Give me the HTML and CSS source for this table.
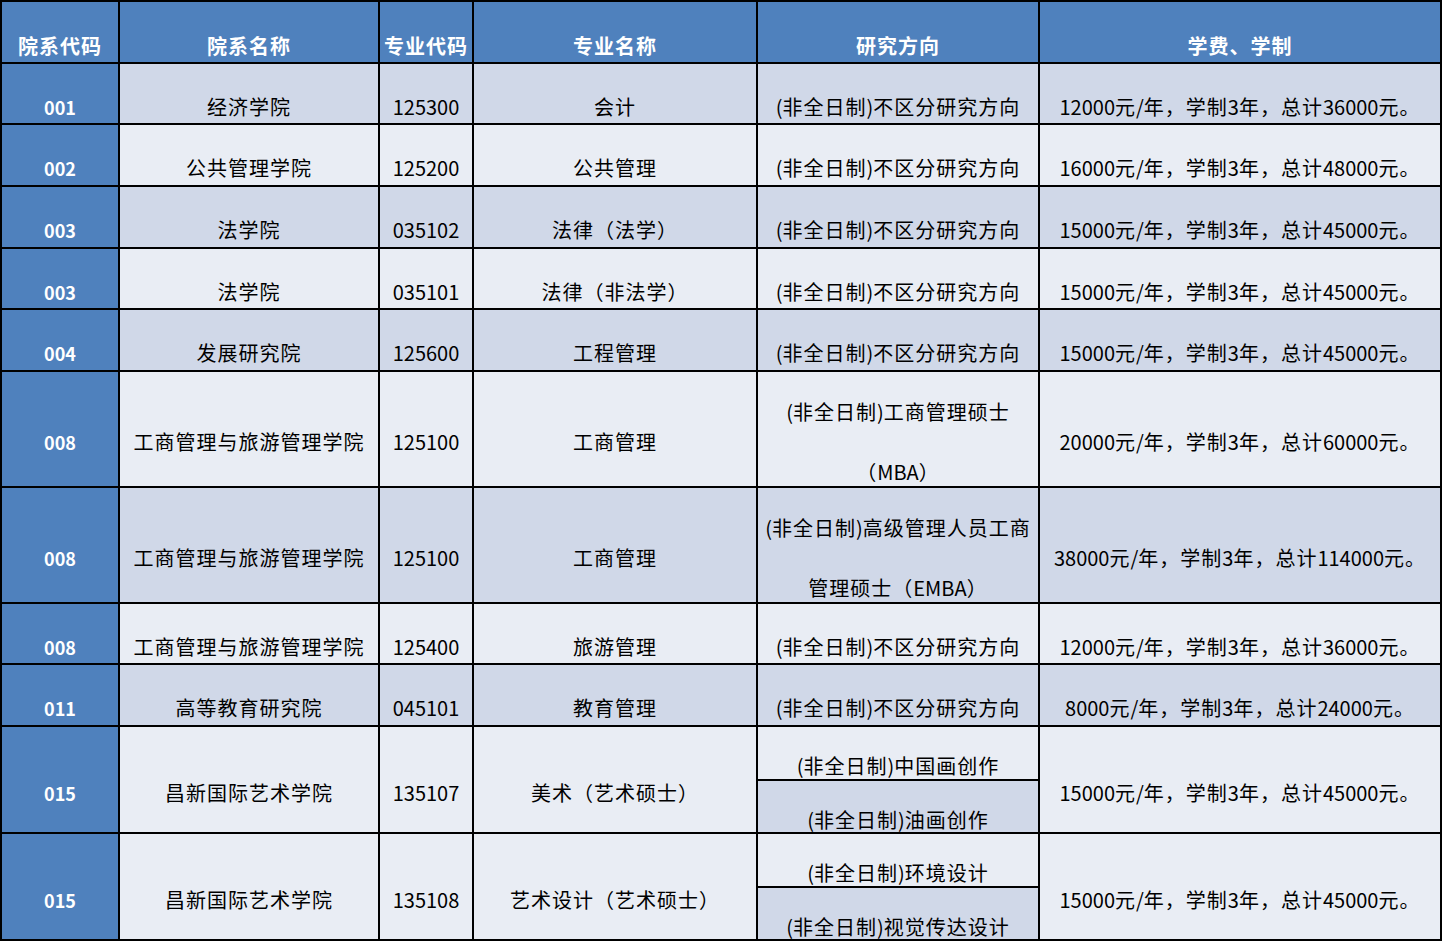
FILE: index.html
```html
<!DOCTYPE html>
<html lang="zh-CN">
<head>
<meta charset="utf-8">
<title>招生专业学费表</title>
<link rel="stylesheet" href="styles.css">
</head>
<body>
<div class="sheet">
  <div class="cell head"><div class="ln">院系代码</div></div>
  <div class="cell head"><div class="ln">院系名称</div></div>
  <div class="cell head"><div class="ln">专业代码</div></div>
  <div class="cell head"><div class="ln">专业名称</div></div>
  <div class="cell head"><div class="ln">研究方向</div></div>
  <div class="cell head"><div class="ln">学费、学制</div></div>

  <div class="cell code num"><div class="ln">001</div></div>
  <div class="cell dark"><div class="ln">经济学院</div></div>
  <div class="cell dark num"><div class="ln">125300</div></div>
  <div class="cell dark"><div class="ln">会计</div></div>
  <div class="cell dark"><div class="ln"><span class="lat">(</span>非全日制<span class="lat">)</span>不区分研究方向</div></div>
  <div class="cell dark"><div class="ln"><span class="lat">12000</span>元<span class="lat">/</span>年，学制<span class="lat">3</span>年，总计<span class="lat">36000</span>元。</div></div>

  <div class="cell code num"><div class="ln">002</div></div>
  <div class="cell light"><div class="ln">公共管理学院</div></div>
  <div class="cell light num"><div class="ln">125200</div></div>
  <div class="cell light"><div class="ln">公共管理</div></div>
  <div class="cell light"><div class="ln"><span class="lat">(</span>非全日制<span class="lat">)</span>不区分研究方向</div></div>
  <div class="cell light"><div class="ln"><span class="lat">16000</span>元<span class="lat">/</span>年，学制<span class="lat">3</span>年，总计<span class="lat">48000</span>元。</div></div>

  <div class="cell code num"><div class="ln">003</div></div>
  <div class="cell dark"><div class="ln">法学院</div></div>
  <div class="cell dark num"><div class="ln">035102</div></div>
  <div class="cell dark"><div class="ln">法律（法学）</div></div>
  <div class="cell dark"><div class="ln"><span class="lat">(</span>非全日制<span class="lat">)</span>不区分研究方向</div></div>
  <div class="cell dark"><div class="ln"><span class="lat">15000</span>元<span class="lat">/</span>年，学制<span class="lat">3</span>年，总计<span class="lat">45000</span>元。</div></div>

  <div class="cell code num"><div class="ln">003</div></div>
  <div class="cell light"><div class="ln">法学院</div></div>
  <div class="cell light num"><div class="ln">035101</div></div>
  <div class="cell light"><div class="ln">法律（非法学）</div></div>
  <div class="cell light"><div class="ln"><span class="lat">(</span>非全日制<span class="lat">)</span>不区分研究方向</div></div>
  <div class="cell light"><div class="ln"><span class="lat">15000</span>元<span class="lat">/</span>年，学制<span class="lat">3</span>年，总计<span class="lat">45000</span>元。</div></div>

  <div class="cell code num"><div class="ln">004</div></div>
  <div class="cell dark"><div class="ln">发展研究院</div></div>
  <div class="cell dark num"><div class="ln">125600</div></div>
  <div class="cell dark"><div class="ln">工程管理</div></div>
  <div class="cell dark"><div class="ln"><span class="lat">(</span>非全日制<span class="lat">)</span>不区分研究方向</div></div>
  <div class="cell dark"><div class="ln"><span class="lat">15000</span>元<span class="lat">/</span>年，学制<span class="lat">3</span>年，总计<span class="lat">45000</span>元。</div></div>

  <div class="cell code num"><div class="ln">008</div></div>
  <div class="cell light"><div class="ln">工商管理与旅游管理学院</div></div>
  <div class="cell light num"><div class="ln">125100</div></div>
  <div class="cell light"><div class="ln">工商管理</div></div>
  <div class="cell light"><div class="ln"><span class="lat">(</span>非全日制<span class="lat">)</span>工商管理硕士</div><div class="ln">（<span class="lat">MBA</span>）</div></div>
  <div class="cell light"><div class="ln"><span class="lat">20000</span>元<span class="lat">/</span>年，学制<span class="lat">3</span>年，总计<span class="lat">60000</span>元。</div></div>

  <div class="cell code num"><div class="ln">008</div></div>
  <div class="cell dark"><div class="ln">工商管理与旅游管理学院</div></div>
  <div class="cell dark num"><div class="ln">125100</div></div>
  <div class="cell dark"><div class="ln">工商管理</div></div>
  <div class="cell dark"><div class="ln"><span class="lat">(</span>非全日制<span class="lat">)</span>高级管理人员工商</div><div class="ln">管理硕士（<span class="lat">EMBA</span>）</div></div>
  <div class="cell dark"><div class="ln"><span class="lat">38000</span>元<span class="lat">/</span>年，学制<span class="lat">3</span>年，总计<span class="lat">114000</span>元。</div></div>

  <div class="cell code num"><div class="ln">008</div></div>
  <div class="cell light"><div class="ln">工商管理与旅游管理学院</div></div>
  <div class="cell light num"><div class="ln">125400</div></div>
  <div class="cell light"><div class="ln">旅游管理</div></div>
  <div class="cell light"><div class="ln"><span class="lat">(</span>非全日制<span class="lat">)</span>不区分研究方向</div></div>
  <div class="cell light"><div class="ln"><span class="lat">12000</span>元<span class="lat">/</span>年，学制<span class="lat">3</span>年，总计<span class="lat">36000</span>元。</div></div>

  <div class="cell code num"><div class="ln">011</div></div>
  <div class="cell dark"><div class="ln">高等教育研究院</div></div>
  <div class="cell dark num"><div class="ln">045101</div></div>
  <div class="cell dark"><div class="ln">教育管理</div></div>
  <div class="cell dark"><div class="ln"><span class="lat">(</span>非全日制<span class="lat">)</span>不区分研究方向</div></div>
  <div class="cell dark"><div class="ln"><span class="lat">8000</span>元<span class="lat">/</span>年，学制<span class="lat">3</span>年，总计<span class="lat">24000</span>元。</div></div>

  <div class="cell code num span2"><div class="ln">015</div></div>
  <div class="cell light span2"><div class="ln">昌新国际艺术学院</div></div>
  <div class="cell light num span2"><div class="ln">135107</div></div>
  <div class="cell light span2"><div class="ln">美术（艺术硕士）</div></div>
  <div class="cell light sub"><div class="ln"><span class="lat">(</span>非全日制<span class="lat">)</span>中国画创作</div></div>
  <div class="cell light span2"><div class="ln"><span class="lat">15000</span>元<span class="lat">/</span>年，学制<span class="lat">3</span>年，总计<span class="lat">45000</span>元。</div></div>
  <div class="cell dark sub"><div class="ln"><span class="lat">(</span>非全日制<span class="lat">)</span>油画创作</div></div>

  <div class="cell code num span2"><div class="ln">015</div></div>
  <div class="cell light span2"><div class="ln">昌新国际艺术学院</div></div>
  <div class="cell light num span2"><div class="ln">135108</div></div>
  <div class="cell light span2"><div class="ln">艺术设计（艺术硕士）</div></div>
  <div class="cell light sub"><div class="ln"><span class="lat">(</span>非全日制<span class="lat">)</span>环境设计</div></div>
  <div class="cell light span2"><div class="ln"><span class="lat">15000</span>元<span class="lat">/</span>年，学制<span class="lat">3</span>年，总计<span class="lat">45000</span>元。</div></div>
  <div class="cell dark sub"><div class="ln"><span class="lat">(</span>非全日制<span class="lat">)</span>视觉传达设计</div></div>
</div>
</body>
</html>
```

FILE: styles.css
```css
html, body {
  margin: 0;
  padding: 0;
  background: #ffffff;
}

body {
  font-family: "Noto Sans CJK SC", "Noto Sans", sans-serif;
  font-size: 20px;
  color: #000000;
}

.sheet {
  display: grid;
  width: max-content;
  grid-template-columns: 116px 258px 92px 282px 280px 400px;
  grid-template-rows: 60px 59px 60px 60px 59px 60px 114px 114px 59px 60px 52px 51px 52px 51px;
  gap: 2px;
  padding: 2px;
  background: #000000;
}

.cell {
  display: flex;
  flex-direction: column;
  justify-content: center;
  align-items: center;
  min-width: 0;
  min-height: 0;
  overflow: visible;
}

.ln {
  flex-shrink: 0;
  height: 60px;
  box-sizing: border-box;
  padding-top: 31px;
  line-height: 24px;
  letter-spacing: 1px;
  white-space: nowrap;
  text-align: center;
}

.lat,
.num .ln {
  letter-spacing: 0;
}

.head {
  background: #4f81bd;
  color: #ffffff;
  font-weight: 700;
}

.head .ln {
  padding-top: 32px;
}

.code {
  background: #4f81bd;
  color: #ffffff;
  font-weight: 700;
  font-size: 18px;
}

.code .ln {
  padding-top: 31px;
}

.dark {
  background: #d0d8e8;
}

.light {
  background: #e9edf4;
}

.span2 {
  grid-row: span 2;
}

.sub {
  grid-column: 5;
}
```
